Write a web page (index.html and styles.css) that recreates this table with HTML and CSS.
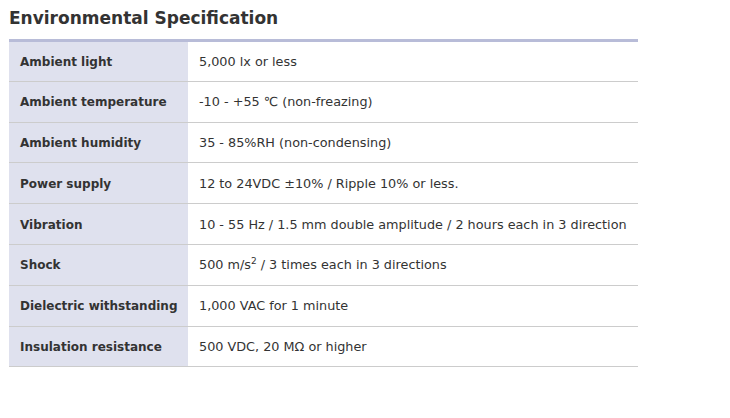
FILE: index.html
```html
<!DOCTYPE html>
<html>
<head>
<meta charset="utf-8">
<link rel="stylesheet" href="styles.css">
</head>
<body>
<h2 class="title">Environmental Specification</h2>
<table class="spec">
<colgroup><col class="c-head"><col class="c-val"></colgroup>
<tr><th>Ambient light</th><td>5,000 lx or less</td></tr>
<tr><th>Ambient temperature</th><td>-10 - +55 ℃ (non-freazing)</td></tr>
<tr><th>Ambient humidity</th><td>35 - 85%RH (non-condensing)</td></tr>
<tr><th>Power supply</th><td>12 to 24VDC ±10% / Ripple 10% or less.</td></tr>
<tr><th>Vibration</th><td>10 - 55 Hz / 1.5 mm double amplitude / 2 hours each in 3 direction</td></tr>
<tr><th>Shock</th><td>500 m/s<sup>2</sup> / 3 times each in 3 directions</td></tr>
<tr><th>Dielectric withstanding</th><td>1,000 VAC for 1 minute</td></tr>
<tr><th>Insulation resistance</th><td>500 VDC, 20 MΩ or higher</td></tr>
</table>
</body>
</html>
```
FILE: styles.css
```css
html, body { margin: 0; padding: 0; background: #fff; }
body {
  padding: 8px 9px;
  font-family: "DejaVu Sans", Verdana, sans-serif;
  color: #333;
}
.title {
  margin: 0 0 11px 0;
  font-size: 17px;
  font-weight: bold;
  line-height: 20px;
  color: #333;
}
.spec {
  width: 629px;
  table-layout: fixed;
  border-collapse: collapse;
  border-top: 3px solid #b8bcd8;
  font-size: 12.8px;
}
.c-head { width: 179px; }
.spec th, .spec td {
  height: 40.8px;
  padding: 0 11px;
  border-bottom: 1px solid #cccccc;
  vertical-align: middle;
  text-align: left;
  box-sizing: border-box;
  white-space: nowrap;
  overflow: visible;
}
.spec th {
  padding-top: 1px;
  background: #dfe1ee;
  font-weight: bold;
  font-size: 12px;
  color: #333;
}
.spec td { color: #333; }
.spec sup { font-size: 9px; line-height: 0; }
```
